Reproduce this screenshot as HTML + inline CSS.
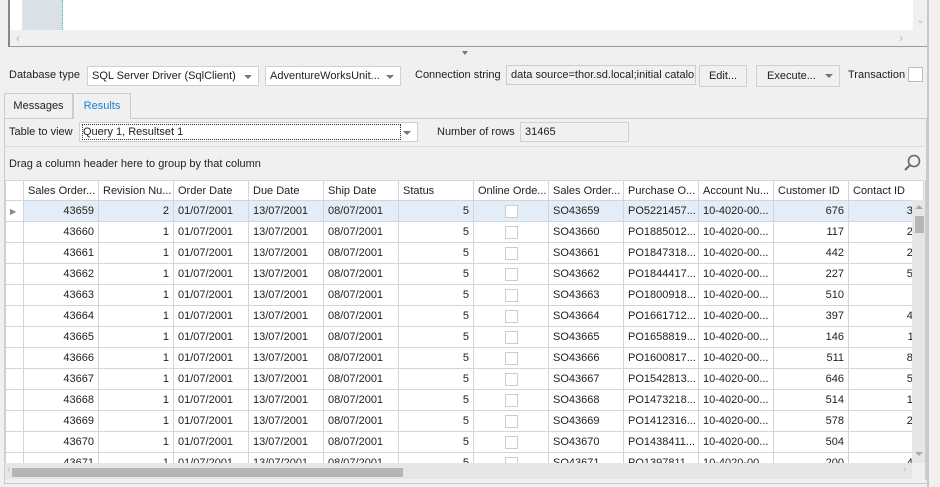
<!DOCTYPE html>
<html><head><style>
*{box-sizing:border-box;margin:0;padding:0}
body{width:940px;height:487px;overflow:hidden;background:#f0f0f0;font-family:"Liberation Sans",sans-serif;font-size:11px;color:#1e1e1e;position:relative}
.a{position:absolute}
.box{position:absolute;background:#fff;border:1px solid #cfcfd6;height:20px;line-height:18px;padding-left:4px;white-space:nowrap;overflow:hidden}
.dd:after{content:"";position:absolute;right:6px;top:8px;border:4px solid transparent;border-top:4px solid #777;border-bottom:0}
table{border-collapse:collapse;table-layout:fixed;position:absolute;left:5px;top:180px;width:918px}
td{border:1px solid #d4d4de;height:21px;padding:0 4px;white-space:nowrap;overflow:hidden;background:#fff}
tr.h td{background:#fff;height:20px}
td.r{text-align:right}
tr.sel td{background:#e3edf8}
.cb{display:inline-block;width:13px;height:13px;border:1px solid #ccc;background:#fff;vertical-align:middle}
</style></head><body>
<div class="a" style="left:8px;top:0;width:920px;height:47px;background:#fff;border-left:2px solid #888"></div>
<div class="a" style="left:22px;top:0;width:41px;height:30px;background:#d9e0e6;border-right:1px dotted #4bc"></div>
<div class="a" style="left:913px;top:0;width:15px;height:30px;background:#f0f0f0;color:#bbb;font-size:10px;text-align:center;line-height:26px;padding-top:8px">&#8964;</div>
<div class="a" style="left:10px;top:30px;width:918px;height:17px;background:#f0f0f0;border-bottom:1px solid #999"></div>
<div class="a" style="left:16px;top:31px;color:#bbb;font-size:12px">&lsaquo;</div>
<div class="a" style="left:899px;top:31px;color:#bbb;font-size:12px">&rsaquo;</div>
<div class="a" style="left:927px;top:0;width:2px;height:487px;background:#c8c8c8"></div>
<div class="a" style="left:462px;top:51px;border:3px solid transparent;border-top:4px solid #777"></div>
<div class="a" style="left:9px;top:69px">Database type</div>
<div class="box dd" style="left:87px;top:66px;width:172px">SQL Server Driver (SqlClient)</div>
<div class="box dd" style="left:265px;top:66px;width:136px">AdventureWorksUnit...</div>
<div class="a" style="left:415px;top:69px">Connection string</div>
<div class="box" style="left:506px;top:65px;width:190px;background:#f0f0f0;border-color:#ccc">data source=thor.sd.local;initial catalo</div>
<div class="box" style="left:699px;top:65px;width:48px;height:22px;background:#f0f0f0;text-align:center;padding:0;line-height:20px">Edit...</div>
<div class="box dd" style="left:756px;top:65px;width:84px;height:22px;background:#f0f0f0;padding-left:10px;line-height:20px">Execute...</div>
<div class="a" style="left:848px;top:69px">Transaction</div>
<div class="a" style="left:908px;top:67px;width:15px;height:15px;background:#fff;border:1px solid #bbb"></div>
<div class="a" style="left:4px;top:118px;width:923px;height:1px;background:#ccc"></div>
<div class="a" style="left:4px;top:93px;width:69px;height:26px;border:1px solid #ccc;text-align:center;line-height:24px">Messages</div>
<div class="a" style="left:73px;top:93px;width:58px;height:26px;border:1px solid #ccc;border-bottom:0;background:#f0f0f0;color:#1a7fd4;text-align:center;line-height:24px">Results</div>
<div class="a" style="left:4px;top:119px;width:923px;height:365px;border:1px solid #ccc;border-top:0"></div>
<div class="a" style="left:9px;top:126px">Table to view</div>
<div class="box dd" style="left:79px;top:122px;width:339px"><span style="border:1px dotted #333;display:inline-block;width:319px;line-height:14px;margin-left:-2px">Query 1, Resultset 1</span></div>
<div class="a" style="left:437px;top:126px">Number of rows</div>
<div class="box" style="left:520px;top:122px;width:109px;background:#f0f0f0">31465</div>
<div class="a" style="left:5px;top:146px;width:920px;height:1px;background:#ddd"></div>
<div class="a" style="left:9px;top:158px">Drag a column header here to group by that column</div>
<svg class="a" style="left:902px;top:153px" width="20" height="20"><circle cx="12" cy="8" r="5.5" fill="none" stroke="#666" stroke-width="1.6"/><line x1="8" y1="12" x2="3" y2="17" stroke="#666" stroke-width="2"/></svg>
<table>
<colgroup><col style="width:18px"><col style="width:75px"><col style="width:75px"><col style="width:75px"><col style="width:75px"><col style="width:75px"><col style="width:75px"><col style="width:75px"><col style="width:75px"><col style="width:75px"><col style="width:75px"><col style="width:75px"><col style="width:75px"></colgroup>
<tr class="h"><td></td><td>Sales Order...</td><td>Revision Nu...</td><td>Order Date</td><td>Due Date</td><td>Ship Date</td><td>Status</td><td>Online Orde...</td><td>Sales Order...</td><td>Purchase O...</td><td>Account Nu...</td><td>Customer ID</td><td>Contact ID</td></tr>
<tr class="sel"><td style="background:#fff;color:#888;font-size:8px">&#9654;</td><td class="r">43659</td><td class="r">2</td><td>01/07/2001</td><td>13/07/2001</td><td>08/07/2001</td><td class="r">5</td><td style="text-align:center"><span class="cb"></span></td><td>SO43659</td><td>PO5221457...</td><td>10-4020-00...</td><td class="r">676</td><td class="r">37</td></tr>
<tr><td></td><td class="r">43660</td><td class="r">1</td><td>01/07/2001</td><td>13/07/2001</td><td>08/07/2001</td><td class="r">5</td><td style="text-align:center"><span class="cb"></span></td><td>SO43660</td><td>PO1885012...</td><td>10-4020-00...</td><td class="r">117</td><td class="r">21</td></tr>
<tr><td></td><td class="r">43661</td><td class="r">1</td><td>01/07/2001</td><td>13/07/2001</td><td>08/07/2001</td><td class="r">5</td><td style="text-align:center"><span class="cb"></span></td><td>SO43661</td><td>PO1847318...</td><td>10-4020-00...</td><td class="r">442</td><td class="r">28</td></tr>
<tr><td></td><td class="r">43662</td><td class="r">1</td><td>01/07/2001</td><td>13/07/2001</td><td>08/07/2001</td><td class="r">5</td><td style="text-align:center"><span class="cb"></span></td><td>SO43662</td><td>PO1844417...</td><td>10-4020-00...</td><td class="r">227</td><td class="r">56</td></tr>
<tr><td></td><td class="r">43663</td><td class="r">1</td><td>01/07/2001</td><td>13/07/2001</td><td>08/07/2001</td><td class="r">5</td><td style="text-align:center"><span class="cb"></span></td><td>SO43663</td><td>PO1800918...</td><td>10-4020-00...</td><td class="r">510</td><td class="r">9</td></tr>
<tr><td></td><td class="r">43664</td><td class="r">1</td><td>01/07/2001</td><td>13/07/2001</td><td>08/07/2001</td><td class="r">5</td><td style="text-align:center"><span class="cb"></span></td><td>SO43664</td><td>PO1661712...</td><td>10-4020-00...</td><td class="r">397</td><td class="r">45</td></tr>
<tr><td></td><td class="r">43665</td><td class="r">1</td><td>01/07/2001</td><td>13/07/2001</td><td>08/07/2001</td><td class="r">5</td><td style="text-align:center"><span class="cb"></span></td><td>SO43665</td><td>PO1658819...</td><td>10-4020-00...</td><td class="r">146</td><td class="r">11</td></tr>
<tr><td></td><td class="r">43666</td><td class="r">1</td><td>01/07/2001</td><td>13/07/2001</td><td>08/07/2001</td><td class="r">5</td><td style="text-align:center"><span class="cb"></span></td><td>SO43666</td><td>PO1600817...</td><td>10-4020-00...</td><td class="r">511</td><td class="r">82</td></tr>
<tr><td></td><td class="r">43667</td><td class="r">1</td><td>01/07/2001</td><td>13/07/2001</td><td>08/07/2001</td><td class="r">5</td><td style="text-align:center"><span class="cb"></span></td><td>SO43667</td><td>PO1542813...</td><td>10-4020-00...</td><td class="r">646</td><td class="r">54</td></tr>
<tr><td></td><td class="r">43668</td><td class="r">1</td><td>01/07/2001</td><td>13/07/2001</td><td>08/07/2001</td><td class="r">5</td><td style="text-align:center"><span class="cb"></span></td><td>SO43668</td><td>PO1473218...</td><td>10-4020-00...</td><td class="r">514</td><td class="r">15</td></tr>
<tr><td></td><td class="r">43669</td><td class="r">1</td><td>01/07/2001</td><td>13/07/2001</td><td>08/07/2001</td><td class="r">5</td><td style="text-align:center"><span class="cb"></span></td><td>SO43669</td><td>PO1412316...</td><td>10-4020-00...</td><td class="r">578</td><td class="r">29</td></tr>
<tr><td></td><td class="r">43670</td><td class="r">1</td><td>01/07/2001</td><td>13/07/2001</td><td>08/07/2001</td><td class="r">5</td><td style="text-align:center"><span class="cb"></span></td><td>SO43670</td><td>PO1438411...</td><td>10-4020-00...</td><td class="r">504</td><td class="r">9</td></tr>
<tr><td></td><td class="r">43671</td><td class="r">1</td><td>01/07/2001</td><td>13/07/2001</td><td>08/07/2001</td><td class="r">5</td><td style="text-align:center"><span class="cb"></span></td><td>SO43671</td><td>PO1397811...</td><td>10-4020-00...</td><td class="r">200</td><td class="r">44</td></tr>
</table>
<div class="a" style="left:5px;top:463px;width:922px;height:20px;background:#f0f0f0"></div>
<div class="a" style="left:5px;top:463px;width:907px;height:16px;background:#e6e6e6"></div>
<div class="a" style="left:12px;top:468px;width:391px;height:9px;background:#b5b5b5"></div>
<div class="a" style="left:7px;top:464px;color:#bbb;font-size:10px">&lsaquo;</div>
<div class="a" style="left:903px;top:464px;color:#bbb;font-size:10px">&rsaquo;</div>
<div class="a" style="left:912px;top:200px;width:14px;height:263px;background:#e6e6e6"></div>
<div class="a" style="left:915px;top:205px;border:4px solid transparent;border-bottom:4px solid #aaa;border-top:0"></div>
<div class="a" style="left:915px;top:216px;width:9px;height:17px;background:#b5b5b5"></div>
<div class="a" style="left:915px;top:452px;border:4px solid transparent;border-top:4px solid #aaa;border-bottom:0"></div>
<div class="a" style="left:925px;top:180px;width:2px;height:300px;background:#ccc"></div>
</body></html>
